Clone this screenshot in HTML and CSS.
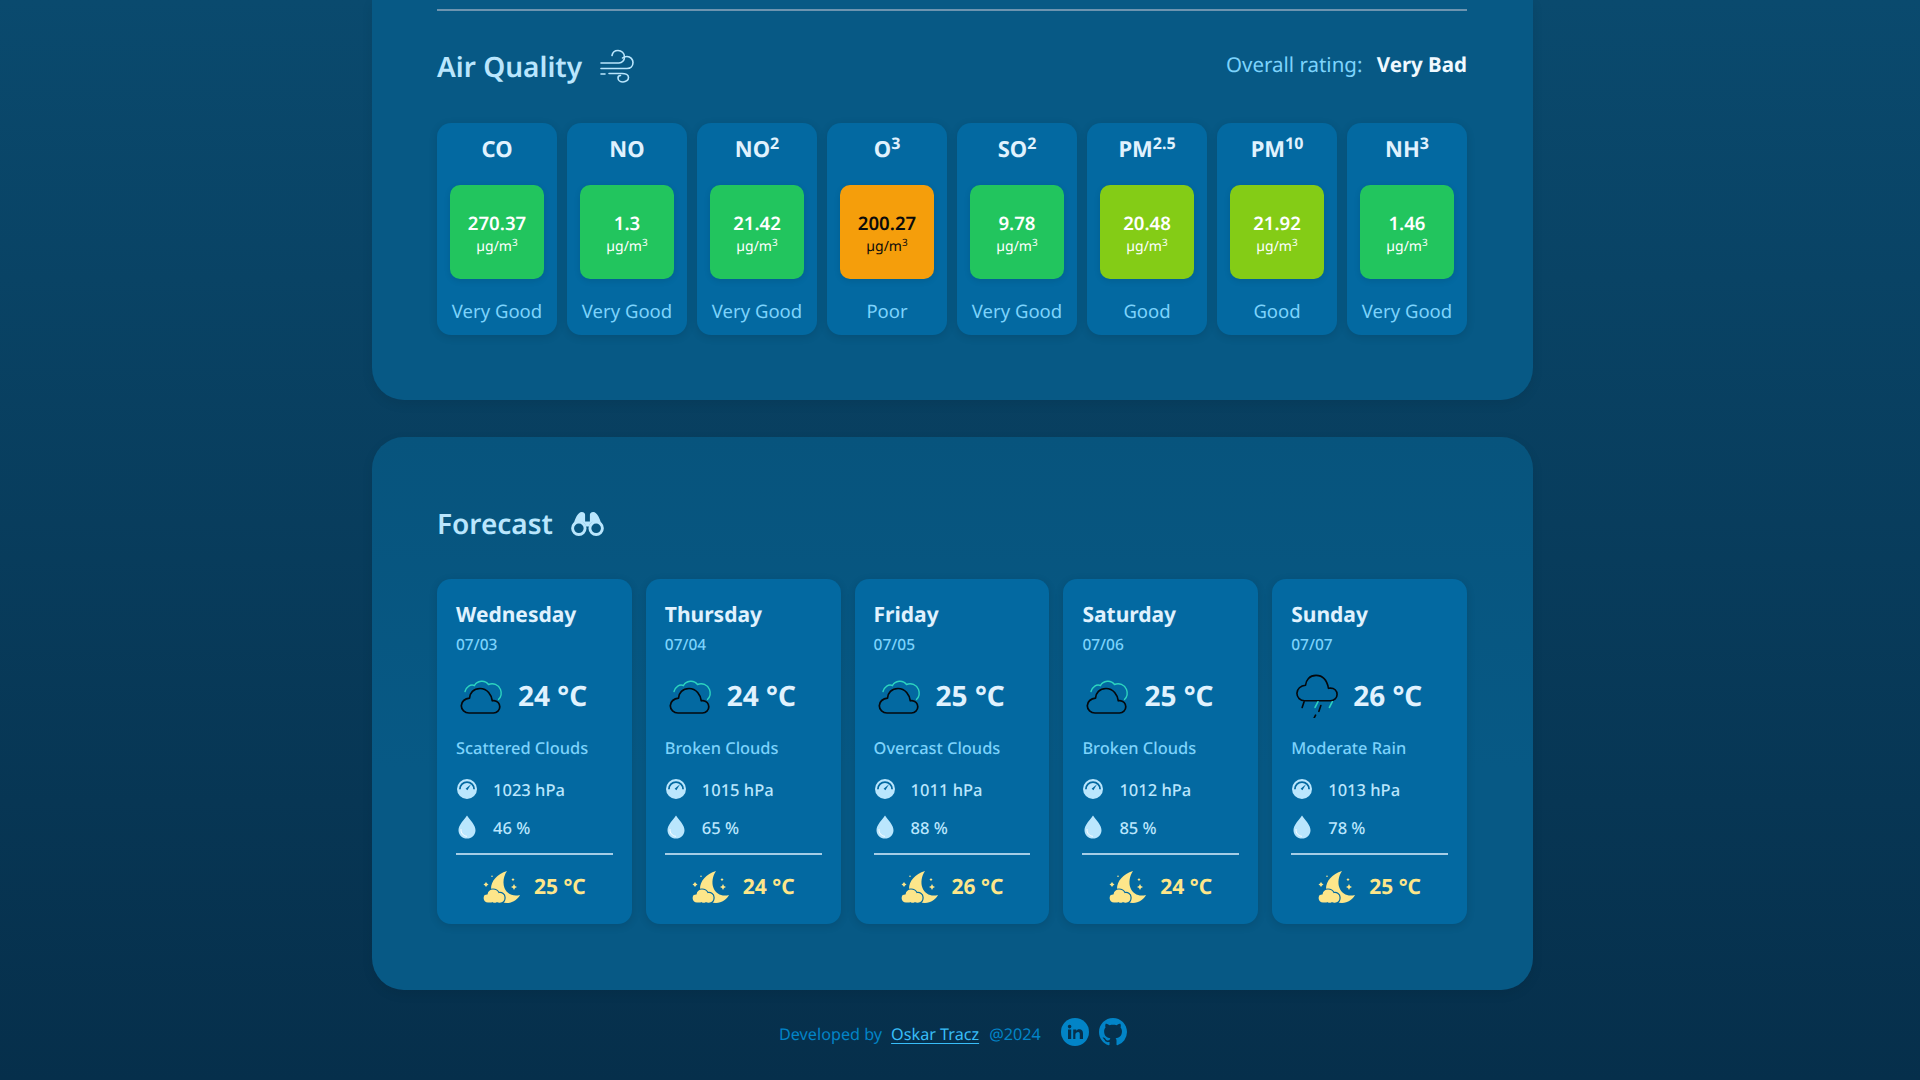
FILE: index.html
```html
<!DOCTYPE html>
<html lang="en">
<head>
    <meta charset="UTF-8">
    <meta name="viewport" content="width=device-width, initial-scale=1.0">
    <title>Weather</title>
    <link rel="stylesheet" href="styles.css">
</head>
<body>
    <svg class="sprites" aria-hidden="true">
        <symbol id="i-clouds" viewBox="0 0 44 36">
            <path d="M5 13.5C6.5 8.5 10.5 6 14.500 7.500C17 2.500 25 1.500 28.500 6.500C33 4.500 38.500 6.500 40.500 11.500C42 15.500 41 19 38.500 21.500" fill="none" stroke="#2dd4bf" stroke-width="1.4" stroke-linecap="round"/>
            <path d="M9 35H33.500C37 35 39.800 32.200 39.800 28.800C39.800 25.500 37.300 22.800 34 22.600C33.500 22.600 32.900 22.600 32.300 22.800C31.500 17 27.500 10.500 20 10.500C13.500 10.500 9.800 15 9.500 20.200C5 20.500 1.300 23.500 1.300 27.800C1.300 31.800 4.800 35 9 35Z" fill="none" stroke="#05080c" stroke-width="1.700" stroke-linejoin="round"/>
        </symbol>
        <symbol id="i-rain" viewBox="0 0 44 46">
            <path d="M9 28H36C40 28 43 25 43 21.500C43 17.500 40 14.800 36 14.800C35.200 14.800 34.600 14.800 34 15C32.500 7 28 1.500 21 1.500C14 1.500 10.500 6.500 10 11.800C5 12.200 1 15.500 1 20.200C1 24.500 4.500 28 9 28Z" fill="none" stroke="#05080c" stroke-width="1.700" stroke-linejoin="round"/>
            <path d="M8.500 29L6.500 35M26 33L24 39M20.500 43L18.500 47" fill="none" stroke="#05080c" stroke-width="1.700" stroke-linecap="round"/>
            <path d="M23 29L20 35M38 29L35 35" fill="none" stroke="#2dd4bf" stroke-width="1.700" stroke-linecap="round"/>
        </symbol>
        <symbol id="i-gauge" viewBox="0 0 20 20">
            <path fill-rule="evenodd" d="M10 0a10 10 0 1 1 0 20a10 10 0 0 1 0-20ZM10 2.200a8 8 0 0 0-8 8h1.800a6.200 6.200 0 0 1 12.400 0H18a8 8 0 0 0-8-8Z"/>
            <path d="M8.600 9.700L14 5.200L10.400 11.200Z" fill="#0369a1"/>
        </symbol>
        <symbol id="i-drop" viewBox="0 0 18 24">
            <path d="M9 .5C12 5 17.500 10 17.500 15.200C17.500 20 13.700 23.500 9 23.500C4.300 23.500.5 20 .5 15.200C.5 10 6 5 9 .5Z"/>
            <path d="M3 14.500C2.800 18 5 20.800 8.500 21.300" fill="none" stroke="#fff" stroke-width="1" stroke-linecap="round"/>
        </symbol>
        <symbol id="i-moon" viewBox="0 0 38 32">
            <path d="M24 0C14 3 8 10 8 18C8 26 16 32 24 32C30 32 35 28 37 24C30 26 24 23 21.500 17C19.500 12 20.500 5 24 0Z"/>
            <path d="M5 32C2 32 0 30 0 27C0 24.500 2 23 4 23C4.500 20 7 18 10 18C13 18 15 19.500 16 21.500C19 21 22 23 22 26C22.500 30 20 32 18 32C16.500 32.500 15 32.300 14 31.800C12.500 32.500 10.500 32.500 9.500 31.800C8 32.300 6.500 32.300 5 32Z" stroke="#0369a1" stroke-width="1.200"/>
            <path d="M3 11l1 1.500l1.500 1l-1.500 1l-1 1.500l-1-1.500l-1.500-1l1.500-1ZM31 13l1 2l2 1l-2 1l-1 2l-1-2l-2-1l2-1ZM30 7l.600 1l1 .600l-1 .600l-.600 1l-.600-1l-1-.600l1-.600ZM9 4.500a.800.800 0 1 1 0 1.600a.800.800 0 0 1 0-1.600Z"/>
        </symbol>
    </svg>

    <main class="page">
        <section class="panel panel-air">
            <hr class="panel-line">
            <div class="section-head">
                <h2 class="section-title">Air Quality</h2>
                <svg class="wind-icon" viewBox="0 0 34 34" fill="none" stroke="currentColor" stroke-width="1.600" stroke-linecap="round">
                    <path d="M1 14H19C22 14 24.500 11.500 24.500 8C24.500 4 21.500 1.500 18 1.500C15 1.500 12.500 3.500 12 6.500"/>
                    <path d="M1 19.500H27C30.500 19.500 33 17 33 13.500C33 10.500 30.500 7.500 27 7.500C25 7.500 23.500 8 22.500 9"/>
                    <path d="M1 25H5M9 24.500H22C25.500 24.500 28.500 26 28.500 28.500C28.500 31 26 33 23 33C20.500 33 18 31.500 18 29C18 27.500 19 26.500 20.500 26.500"/>
                </svg>
                <p class="overall">Overall rating: <strong>Very Bad</strong></p>
            </div>
            <div class="air-grid">
                <div class="air-card">
                    <h3 class="air-name">CO</h3>
                    <div class="air-box box-green"><b>270.37</b><span>µg/m<sup>3</sup></span></div>
                    <p class="air-label">Very Good</p>
                </div>
                <div class="air-card">
                    <h3 class="air-name">NO</h3>
                    <div class="air-box box-green"><b>1.3</b><span>µg/m<sup>3</sup></span></div>
                    <p class="air-label">Very Good</p>
                </div>
                <div class="air-card">
                    <h3 class="air-name">NO<sup>2</sup></h3>
                    <div class="air-box box-green"><b>21.42</b><span>µg/m<sup>3</sup></span></div>
                    <p class="air-label">Very Good</p>
                </div>
                <div class="air-card">
                    <h3 class="air-name">O<sup>3</sup></h3>
                    <div class="air-box box-amber"><b>200.27</b><span>µg/m<sup>3</sup></span></div>
                    <p class="air-label">Poor</p>
                </div>
                <div class="air-card">
                    <h3 class="air-name">SO<sup>2</sup></h3>
                    <div class="air-box box-green"><b>9.78</b><span>µg/m<sup>3</sup></span></div>
                    <p class="air-label">Very Good</p>
                </div>
                <div class="air-card">
                    <h3 class="air-name">PM<sup>2.5</sup></h3>
                    <div class="air-box box-lime"><b>20.48</b><span>µg/m<sup>3</sup></span></div>
                    <p class="air-label">Good</p>
                </div>
                <div class="air-card">
                    <h3 class="air-name">PM<sup>10</sup></h3>
                    <div class="air-box box-lime"><b>21.92</b><span>µg/m<sup>3</sup></span></div>
                    <p class="air-label">Good</p>
                </div>
                <div class="air-card">
                    <h3 class="air-name">NH<sup>3</sup></h3>
                    <div class="air-box box-green"><b>1.46</b><span>µg/m<sup>3</sup></span></div>
                    <p class="air-label">Very Good</p>
                </div>
            </div>
        </section>

        <section class="panel panel-forecast">
            <div class="section-head">
                <h2 class="section-title">Forecast</h2>
                <svg class="binoculars" viewBox="0 0 34 26">
                    <path fill="currentColor" d="M2.500 14C4 8 7 1 11 1C13.500 1 14.500 2.500 14.500 4V11H19.500V4C19.500 2.500 20.500 1 23 1C27 1 30 8 31.500 14C29 11.500 27 10.500 26 10.500C22 10.500 19.500 13 18.500 16H15.500C14.500 13 12 10.500 8 10.500C7 10.500 5 11.500 2.500 14Z"/>
                    <circle cx="8" cy="18" r="6.500" fill="none" stroke="currentColor" stroke-width="3"/>
                    <circle cx="26" cy="18" r="6.500" fill="none" stroke="currentColor" stroke-width="3"/>
                </svg>
            </div>
            <div class="day-grid">
                <article class="day-card">
                    <h3 class="day-name">Wednesday</h3>
                    <p class="day-date">07/03</p>
                    <div class="day-temp"><svg class="sky-icon"><use href="#i-clouds"/></svg><span>24 °C</span></div>
                    <p class="day-desc">Scattered Clouds</p>
                    <div class="day-stat"><svg class="stat-icon"><use href="#i-gauge"/></svg><span>1023 hPa</span></div>
                    <div class="day-stat"><svg class="stat-icon"><use href="#i-drop"/></svg><span>46 %</span></div>
                    <div class="day-night"><svg class="moon-icon"><use href="#i-moon"/></svg><span>25 °C</span></div>
                </article>
                <article class="day-card">
                    <h3 class="day-name">Thursday</h3>
                    <p class="day-date">07/04</p>
                    <div class="day-temp"><svg class="sky-icon"><use href="#i-clouds"/></svg><span>24 °C</span></div>
                    <p class="day-desc">Broken Clouds</p>
                    <div class="day-stat"><svg class="stat-icon"><use href="#i-gauge"/></svg><span>1015 hPa</span></div>
                    <div class="day-stat"><svg class="stat-icon"><use href="#i-drop"/></svg><span>65 %</span></div>
                    <div class="day-night"><svg class="moon-icon"><use href="#i-moon"/></svg><span>24 °C</span></div>
                </article>
                <article class="day-card">
                    <h3 class="day-name">Friday</h3>
                    <p class="day-date">07/05</p>
                    <div class="day-temp"><svg class="sky-icon"><use href="#i-clouds"/></svg><span>25 °C</span></div>
                    <p class="day-desc">Overcast Clouds</p>
                    <div class="day-stat"><svg class="stat-icon"><use href="#i-gauge"/></svg><span>1011 hPa</span></div>
                    <div class="day-stat"><svg class="stat-icon"><use href="#i-drop"/></svg><span>88 %</span></div>
                    <div class="day-night"><svg class="moon-icon"><use href="#i-moon"/></svg><span>26 °C</span></div>
                </article>
                <article class="day-card">
                    <h3 class="day-name">Saturday</h3>
                    <p class="day-date">07/06</p>
                    <div class="day-temp"><svg class="sky-icon"><use href="#i-clouds"/></svg><span>25 °C</span></div>
                    <p class="day-desc">Broken Clouds</p>
                    <div class="day-stat"><svg class="stat-icon"><use href="#i-gauge"/></svg><span>1012 hPa</span></div>
                    <div class="day-stat"><svg class="stat-icon"><use href="#i-drop"/></svg><span>85 %</span></div>
                    <div class="day-night"><svg class="moon-icon"><use href="#i-moon"/></svg><span>24 °C</span></div>
                </article>
                <article class="day-card">
                    <h3 class="day-name">Sunday</h3>
                    <p class="day-date">07/07</p>
                    <div class="day-temp"><svg class="sky-icon"><use href="#i-rain"/></svg><span>26 °C</span></div>
                    <p class="day-desc">Moderate Rain</p>
                    <div class="day-stat"><svg class="stat-icon"><use href="#i-gauge"/></svg><span>1013 hPa</span></div>
                    <div class="day-stat"><svg class="stat-icon"><use href="#i-drop"/></svg><span>78 %</span></div>
                    <div class="day-night"><svg class="moon-icon"><use href="#i-moon"/></svg><span>25 °C</span></div>
                </article>
            </div>
        </section>

        <footer class="footer">
            <span>Developed by</span>
            <a class="footer-link" href="#">Oskar Tracz</a>
            <span>@2024</span>
            <div class="footer-icons">
                <svg class="social" viewBox="0 0 28 28">
                    <circle cx="14" cy="14" r="14" fill="currentColor"/>
                    <path fill="#062f4b" d="M7 11.500h3.200V21H7ZM8.600 6.800a1.800 1.800 0 1 1 0 3.600a1.800 1.800 0 0 1 0-3.600ZM12.200 11.500h3v1.300c.6-1 1.700-1.600 3-1.600c2.800 0 3.800 1.700 3.800 4.500V21h-3.200v-4.700c0-1.300-.3-2.300-1.600-2.300c-1.400 0-2.800.9-2.800 2.500V21h-2.200Z"/>
                </svg>
                <svg class="social" viewBox="0 0 16 16" fill="currentColor">
                    <path d="M8 0C3.580 0 0 3.580 0 8c0 3.540 2.290 6.530 5.470 7.590.4.070.55-.17.55-.38 0-.19-.01-.82-.01-1.490-2.010.37-2.530-.49-2.690-.94-.09-.23-.48-.94-.82-1.130-.28-.15-.68-.52-.01-.53.63-.01 1.080.58 1.230.82.720 1.210 1.870.87 2.330.66.070-.52.280-.87.510-1.070-1.780-.2-3.640-.89-3.640-3.950 0-.87.310-1.590.820-2.150-.08-.2-.36-1.020.08-2.120 0 0 .67-.21 2.200.82.640-.18 1.320-.27 2-.27s1.360.09 2 .27c1.530-1.040 2.200-.82 2.200-.82.440 1.100.160 1.920.080 2.120.51.560.82 1.270.82 2.150 0 3.070-1.870 3.750-3.650 3.950.29.250.54.730.54 1.480 0 1.070-.01 1.930-.01 2.200 0 .21.150.460.550.380A8.010 8.010 0 0 0 16 8c0-4.420-3.580-8-8-8Z"/>
                </svg>
            </div>
        </footer>
    </main>
</body>
</html>
```

FILE: styles.css
```css
* {
    box-sizing: border-box;
}

html, body {
    margin: 0;
    height: 1080px;
    overflow: hidden;
}

body {
    font-family: "Noto Sans", "Open Sans", sans-serif;
    text-rendering: geometricPrecision;
    background: linear-gradient(180deg, #0a4a6e 0%, #062f4b 100%);
    color: #e0f2fe;
    padding-right: 15px;
}

h2, h3, p {
    margin: 0;
}

.sprites {
    position: absolute;
    width: 0;
    height: 0;
}

.page {
    width: 1161px;
    margin: 0 auto;
    display: flex;
    flex-direction: column;
}

.panel {
    background: #075985;
    padding: 0 66px 66px 65px;
    box-shadow: 0 4px 12px rgba(0, 0, 0, 0.08);
}

.panel-air {
    height: 400px;
    padding-top: 9px;
    border-radius: 0 0 32px 32px;
}

.panel-forecast {
    height: 553px;
    margin-top: 37px;
    padding-top: 62px;
    border-radius: 32px;
    background: linear-gradient(180deg, #07547d 0%, #075985 60%);
}

.panel-line {
    margin: 0 0 31px;
    border: 0;
    height: 2px;
    background: #6c94b0;
}

.section-head {
    display: flex;
    align-items: center;
    height: 48px;
}

.section-title {
    font-size: 28px;
    font-weight: 600;
    color: #bae6fd;
    line-height: 40px;
    margin-top: 1px;
}

.wind-icon {
    width: 34px;
    height: 34px;
    margin-left: 18px;
    color: #bae6fd;
}

.overall {
    margin-left: auto;
    font-size: 20.500px;
    color: #7dd3fc;
    margin-top: -3px;
}

.overall strong {
    margin-left: 9px;
    font-weight: 700;
    color: #f0f9ff;
}

.air-grid {
    display: grid;
    grid-template-columns: repeat(8, minmax(0, 1fr));
    gap: 10px;
    margin-top: 33px;
}

.air-card {
    height: 212px;
    padding: 11px 13px 0;
    background: #0369a1;
    border-radius: 14px;
    box-shadow: 0 2px 8px rgba(0, 0, 0, 0.12);
    text-align: center;
}

.air-name {
    font-size: 22px;
    font-weight: 700;
    line-height: 30px;
    height: 51px;
    color: #e0f2fe;
}

.air-name sup {
    font-size: 16px;
    line-height: 0;
    vertical-align: 8px;
}

.air-box {
    height: 94px;
    border-radius: 10px;
    display: flex;
    flex-direction: column;
    align-items: center;
    justify-content: center;
    box-shadow: 0 2px 6px rgba(0, 0, 0, 0.1);
    color: #fff;
}

.air-box b {
    font-size: 18.600px;
    font-weight: 600;
    line-height: 24px;
    margin-top: 2px;
}

.air-box span {
    font-size: 14px;
    line-height: 20px;
    margin-top: 1px;
    margin-bottom: -3px;
}

.air-box sup {
    font-size: 10px;
    line-height: 0;
    vertical-align: 5px;
}

.box-green {
    background: #22c55e;
}

.box-amber {
    background: #f59e0b;
    color: #0a0a0a;
}

.box-lime {
    background: #84cc16;
}

.air-label {
    margin-top: 19px;
    font-size: 18.500px;
    line-height: 28px;
    white-space: nowrap;
    color: #7dd3fc;
}

.day-grid {
    display: grid;
    grid-template-columns: repeat(5, minmax(0, 1fr));
    gap: 14px;
    margin-top: 32px;
}

.panel-forecast .section-head {
    gap: 18px;
}

.binoculars {
    width: 33px;
    height: 25px;
    color: #bae6fd;
}

.day-card {
    height: 345px;
    padding: 20px 19px 0;
    background: #0369a1;
    border-radius: 14px;
    box-shadow: 0 2px 8px rgba(0, 0, 0, 0.12);
}

.day-name {
    font-size: 21px;
    font-weight: 700;
    line-height: 32px;
    color: #e0f2fe;
}

.day-date {
    font-size: 15.500px;
    font-weight: 500;
    line-height: 24px;
    margin-top: 1px;
    color: #7dd3fc;
}

.day-temp {
    display: flex;
    align-items: center;
    height: 44px;
    margin-top: 18px;
    font-size: 28px;
    font-weight: 700;
    color: #e0f2fe;
}

.sky-icon {
    width: 44px;
    height: 44px;
    margin-right: 14px;
    margin-left: 4px;
}

.day-desc {
    margin-top: 18px;
    font-size: 16.400px;
    font-weight: 500;
    line-height: 24px;
    color: #7dd3fc;
}

.day-stat {
    display: flex;
    align-items: center;
    height: 30px;
    margin-top: 14px;
    font-size: 16.500px;
    font-weight: 500;
    color: #bae6fd;
}

.day-stat + .day-stat {
    margin-top: 8px;
}

.stat-icon {
    width: 20px;
    height: 24px;
    margin-left: 1px;
    margin-right: 16px;
    fill: #bae6fd;
}

.day-night {
    display: flex;
    align-items: center;
    justify-content: center;
    margin-top: 11px;
    padding-top: 16px;
    border-top: 2px solid #a5cde6;
    font-size: 21px;
    font-weight: 700;
    color: #fde68a;
}

.moon-icon {
    width: 38px;
    height: 32px;
    margin-right: 13px;
    fill: #fde68a;
}

.footer {
    display: flex;
    align-items: center;
    height: 88px;
    padding-left: 407px;
    font-size: 16.200px;
    color: #0284c7;
}

.footer-link {
    margin-left: 9px;
    margin-right: 10px;
    color: #38bdf8;
    text-underline-offset: 3px;
}

.footer-icons {
    display: flex;
    gap: 10px;
    margin-left: 20px;
    margin-top: -4px;
}

.social {
    width: 28px;
    height: 28px;
    color: #0284c7;
}
```
